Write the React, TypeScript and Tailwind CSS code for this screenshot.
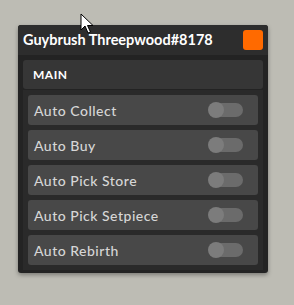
import React from "react";

const rows = ["Auto Collect", "Auto Buy", "Auto Pick Store", "Auto Pick Setpiece", "Auto Rebirth"];

function Toggle() {
  return (
    <div className="relative w-[35px] h-[16px] shrink-0">
      <div className="absolute left-[2px] right-0 top-[1px] h-[14px] rounded-full bg-[#6b6b6b]" />
      <div className="absolute left-0 top-0 w-[16px] h-[16px] rounded-full bg-[#7c7c7c]" />
    </div>
  );
}

export default function App() {
  return (
    <div
      className="relative w-[294px] h-[305px] bg-[#bdbcb4] pt-[25px] pl-[18px]"
      style={{ fontFamily: "Lato, 'Open Sans', sans-serif" }}
    >
      <div className="w-[250px] h-[248px] bg-[#232323] rounded-[3px] shadow-[0_2px_4px_rgba(0,0,0,0.35)] flex flex-col">
        <div className="h-[30px] bg-[#2d2d2d] rounded-t-[3px] flex items-center justify-between pl-[5px] pr-[5px]">
          <span className="text-white font-bold text-[14.5px]">Guybrush Threepwood#8178</span>
          <div className="w-[20px] h-[20px] rounded-[3px] bg-[#ff6a00]" />
        </div>
        <div className="pl-[5px] pr-[5px] pt-[5px] flex flex-col">
          <div className="h-[29px] bg-[#363636] rounded-[3px] flex items-center pl-[10px]">
            <span className="text-white font-bold text-[12px] tracking-[0.5px]">MAIN</span>
          </div>
          <div className="mt-[1px] bg-[#2a2a2a] p-[5px] flex flex-col gap-[5px]">
            {rows.map((r) => (
              <div key={r} className="h-[30px] bg-[#484848] rounded-[3px] flex items-center justify-between pl-[6px] pr-[15px]">
                <span className="text-[#d6d6d6] text-[14px] font-medium tracking-[0.5px]">{r}</span>
                <Toggle />
              </div>
            ))}
          </div>
        </div>
      </div>
      <svg className="absolute left-[80px] top-[13px]" width="14" height="22" viewBox="0 0 14 22">
        <path d="M1 1 L1 17 L5 13 L8 20 L10.5 19 L7.5 12.5 L13 12.5 Z" fill="#fff" stroke="#000" strokeWidth="1" />
      </svg>
    </div>
  );
}
